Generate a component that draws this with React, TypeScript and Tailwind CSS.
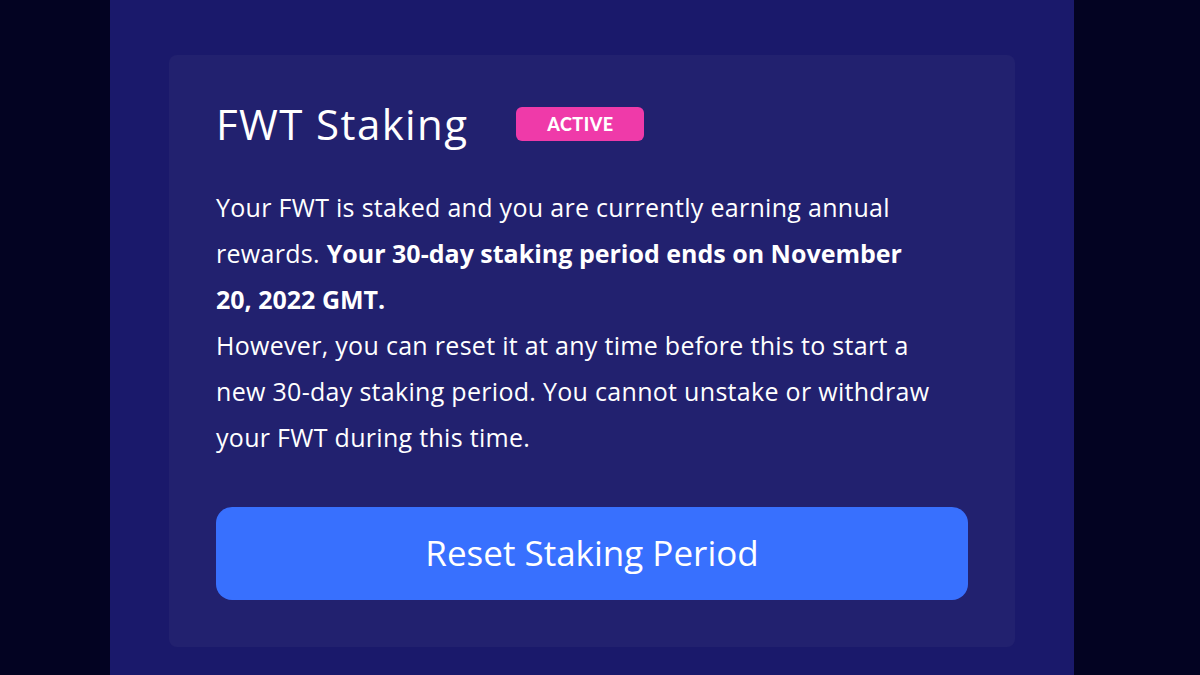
import React from "react";

export default function App() {
  return (
    <div className="w-[1200px] h-[675px] bg-[#030322] flex overflow-hidden" style={{ fontFamily: "'Open Sans', 'Noto Sans', sans-serif" }}>
      <div className="ml-[110px] w-[964px] h-full bg-[#1a196b] pt-[55px] px-[59px]">
        <div className="bg-[#22216f] rounded-lg pt-[45px] pb-[47px] px-[47px] text-white">
          <div className="flex items-center h-[48px]">
            <h1 className="text-[42px] leading-[48px] font-normal tracking-[1.4px]">FWT Staking</h1>
            <span className="ml-[48px] w-[128px] h-[34px] rounded-md bg-[#ef3aa9] flex items-center justify-center text-[18px] font-black tracking-[0.5px]" style={{ fontFamily: "Lato, sans-serif" }}>ACTIVE</span>
          </div>
          <p className="mt-[36px] text-[25px] leading-[46px] tracking-[0.3px]">
            Your FWT is staked and you are currently earning annual
            <br />
            rewards. <b className="font-bold tracking-normal">Your 30-day staking period ends on November</b>
            <br />
            <b className="font-bold tracking-normal">20, 2022 GMT.</b>
            <br />
            However, you can reset it at any time before this to start a
            <br />
            new 30-day staking period. You cannot unstake or withdraw
            <br />
            your FWT during this time.
          </p>
          <button className="mt-[47px] w-full h-[93px] rounded-2xl bg-[#3870fe] text-white text-[35px]">
            Reset Staking Period
          </button>
        </div>
      </div>
    </div>
  );
}
